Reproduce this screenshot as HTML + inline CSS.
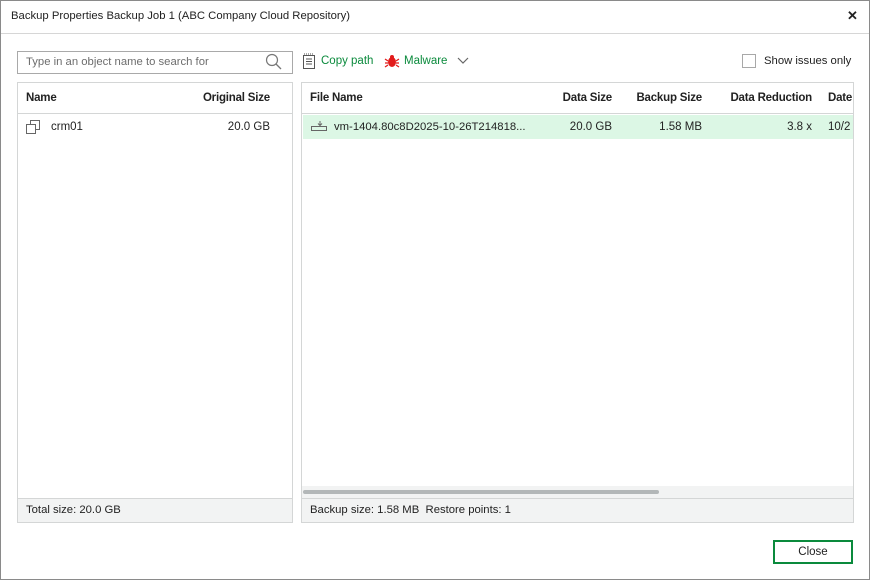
<!DOCTYPE html>
<html><head><meta charset="utf-8"><style>
*{box-sizing:border-box;margin:0;padding:0}
body{width:870px;height:580px;overflow:hidden;background:#fff;font-family:"Liberation Sans",sans-serif;font-size:11.5px;color:#222;position:relative}
.win{position:absolute;left:0;top:0;width:870px;height:580px;border:1px solid #8a8a8a}
.a{position:absolute;white-space:nowrap}
.r{position:absolute;white-space:nowrap;text-align:right}
.b{font-weight:bold;letter-spacing:-0.2px}
.panel{position:absolute;border:1px solid #d4d6d6;background:#fff}
.foot{position:absolute;left:0;right:0;bottom:0;height:24px;background:#f2f3f3;border-top:1px solid #d4d6d6}
</style></head><body>
<div class="win"></div>
<div class="a" style="left:11px;top:10px;font-size:11.3px">Backup Properties Backup Job 1 (ABC Company Cloud Repository)</div>
<div class="a b" style="left:847px;top:8px;font-size:13px">✕</div>
<div class="a" style="left:1px;top:33px;width:868px;height:1px;background:#d6d6d6"></div>

<div class="a" style="left:17px;top:51px;width:276px;height:23px;border:1px solid #a9a9a9"></div>
<div class="a" style="left:26px;top:56px;color:#6d6d6d;font-size:11.3px">Type in an object name to search for</div>
<svg class="a" style="left:265px;top:53px" width="18" height="18"><circle cx="7" cy="7" r="5.5" fill="none" stroke="#777" stroke-width="1.2"/><line x1="11" y1="11" x2="16" y2="16" stroke="#777" stroke-width="1.3"/></svg>

<svg class="a" style="left:302px;top:53px" width="14" height="17"><rect x="1.5" y="2.5" width="11" height="13" fill="none" stroke="#555"/><path d="M4 6h6M4 8.5h6M4 11h6" stroke="#555"/><path d="M2 1h10" stroke="#555" stroke-dasharray="1 1"/></svg>
<div class="a" style="left:321px;top:55px;color:#0a8a3c">Copy path</div>
<svg class="a" style="left:384px;top:54px" width="16" height="14"><ellipse cx="8" cy="8" rx="4" ry="5" fill="#e21b1b"/><circle cx="8" cy="3" r="2" fill="#e21b1b"/><path d="M1 5l3 2M1 9h3M1 13l3-2M15 5l-3 2M15 9h-3M15 13l-3-2" stroke="#e21b1b" stroke-width="1.3"/></svg>
<div class="a" style="left:404px;top:55px;color:#0a8a3c">Malware</div>
<svg class="a" style="left:457px;top:57px" width="12" height="8"><path d="M1 1l5 5 5-5" fill="none" stroke="#666" stroke-width="1.2"/></svg>

<div class="a" style="left:742px;top:54px;width:14px;height:14px;border:1px solid #a8a8a8"></div>
<div class="a" style="left:764px;top:55px;font-size:11.3px">Show issues only</div>

<div class="panel" style="left:17px;top:82px;width:276px;height:441px">
 <div class="a" style="left:0;top:30px;width:274px;height:1px;background:#d4d6d6"></div>
 <div class="a b" style="left:8px;top:9px">Name</div>
 <div class="r b" style="right:22px;top:9px">Original Size</div>
 <svg class="a" style="left:8px;top:37px" width="14" height="14"><rect x="4.5" y="0.5" width="9" height="9" fill="#fff" stroke="#666"/><rect x="0.5" y="4.5" width="9" height="9" fill="#fff" stroke="#666"/></svg>
 <div class="a" style="left:33px;top:38px">crm01</div>
 <div class="r" style="right:22px;top:38px">20.0 GB</div>
 <div class="foot"><div class="a" style="left:8px;top:5px;font-size:11.3px">Total size: 20.0 GB</div></div>
</div>

<div class="panel" style="left:301px;top:82px;width:553px;height:441px;overflow:hidden">
 <div class="a" style="left:0;top:30px;width:553px;height:1px;background:#d4d6d6"></div>
 <div class="a b" style="left:8px;top:9px">File Name</div>
 <div class="r b" style="right:241px;top:9px">Data Size</div>
 <div class="r b" style="right:151px;top:9px">Backup Size</div>
 <div class="r b" style="right:41px;top:9px">Data Reduction</div>
 <div class="a b" style="left:526px;top:9px">Date</div>
 <div class="a" style="left:1px;top:32px;width:551px;height:24px;background:#dcf7e5"></div>
 <svg class="a" style="left:9px;top:38px" width="16" height="10"><path d="M0.5 5.5h15v4h-15z" fill="none" stroke="#666"/><path d="M9 0v4M7 2.5l2 2 2-2" fill="none" stroke="#666"/></svg>
 <div class="a" style="left:32px;top:38px;font-size:11.3px">vm-1404.80c8D2025-10-26T214818...</div>
 <div class="r" style="right:241px;top:38px">20.0 GB</div>
 <div class="r" style="right:151px;top:38px">1.58 MB</div>
 <div class="r" style="right:41px;top:38px">3.8 x</div>
 <div class="a" style="left:526px;top:38px">10/2</div>
 <div class="a" style="left:0;top:403px;width:553px;height:12px;background:#f2f3f3"></div>
 <div class="a" style="left:1px;top:407px;width:356px;height:4px;border-radius:2px;background:#b3b7b8"></div>
 <div class="foot"><div class="a" style="left:8px;top:5px;font-size:11.3px">Backup size: 1.58 MB&nbsp; Restore points: 1</div></div>
</div>

<div class="a" style="left:773px;top:540px;width:80px;height:24px;border:2px solid #0a8a3c;text-align:center;line-height:20px">Close</div>
</body></html>
